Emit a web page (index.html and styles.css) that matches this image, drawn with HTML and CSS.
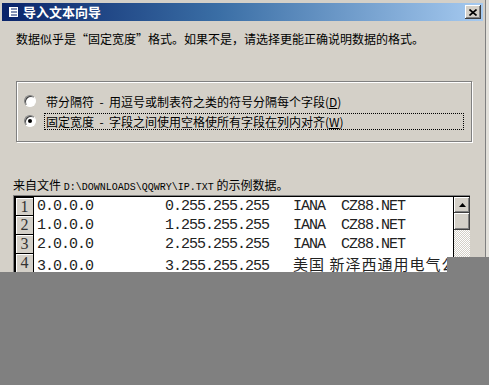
FILE: index.html
```html
<!DOCTYPE html>
<html lang="zh-CN">
<head>
  <meta charset="UTF-8" />
  <title>导入文本向导</title>
  <link rel="stylesheet" href="styles.css">
</head>
<body>

<div class="window">
  <div class="titlebar">
    <svg class="app-icon" width="14" height="12" viewBox="0 0 14 12">
      <rect x="0.5" y="0.5" width="13" height="11" fill="#fff" stroke="#0a246a"/>
      <rect x="1" y="1" width="3" height="10" fill="#0a246a"/>
      <path d="M6 3h6M6 6h6M6 9h6" stroke="#0a246a" stroke-width="1.2"/>
    </svg>
    <span class="title">导入文本向导</span>
    <button class="close">
      <svg width="8" height="7" viewBox="0 0 8 7">
        <path d="M0.5 0.5l7 6M7.5 0.5l-7 6" stroke="#000" stroke-width="1.6"/>
      </svg>
    </button>
  </div>

  <div class="wizard">
    <p class="intro">数据似乎是“固定宽度”格式。如果不是，请选择更能正确说明数据的格式。</p>

    <div class="group">
      <label class="option">
        <span class="radio"></span>
        <span class="option-text">带分隔符 &nbsp;- &nbsp;用逗号或制表符之类的符号分隔每个字段(<u>D</u>)</span>
      </label>
      <label class="option checked">
        <span class="radio"></span>
        <span class="option-text focused">固定宽度 &nbsp;- &nbsp;字段之间使用空格使所有字段在列内对齐(<u>W</u>)</span>
      </label>
    </div>

    <p class="source">来自文件 <span class="path">D:\DOWNLOADS\QQWRY\IP.TXT</span> 的示例数据。</p>

    <div class="preview">
      <div class="rows">
        <div class="row"><span class="num">1</span><span class="line">0.0.0.0         0.255.255.255   IANA  CZ88.NET</span></div>
        <div class="row"><span class="num">2</span><span class="line">1.0.0.0         1.255.255.255   IANA  CZ88.NET</span></div>
        <div class="row"><span class="num">3</span><span class="line">2.0.0.0         2.255.255.255   IANA  CZ88.NET</span></div>
        <div class="row"><span class="num">4</span><span class="line">3.0.0.0         3.255.255.255   <span class="cjk">美国 新泽西通用电气公司</span></span></div>
      </div>
      <div class="scrollbar">
        <div class="scroll-btn">
          <svg width="7" height="4" viewBox="0 0 7 4"><path d="M3.5 0L7 4H0z" fill="#000"/></svg>
        </div>
        <div class="thumb"></div>
        <div class="track"></div>
      </div>
    </div>
  </div>
</div>

<div class="shade">
  <div class="notch"></div>
</div>

</body>
</html>
```

FILE: styles.css
```css
body {
  margin: 0;
  background: #e2e0da;
  font-family: "Noto Sans CJK SC", "Liberation Sans", sans-serif;
  font-size: 12px;
  color: #000;
}
.window {
  width: 486px;
  height: 272px;
  overflow: hidden;
  background: #d4d0c8;
  border-right: 1px solid #808080;
  padding: 3px 2px 0 2px;
  box-sizing: border-box;
}
.titlebar {
  display: flex;
  align-items: center;
  height: 18px;
  padding: 0 2px 0 3px;
  background: linear-gradient(to right, #0a246a, #3a6ea5 45%, #a6caf0);
}
.app-icon {
  margin-right: 4px;
}
.title {
  flex-grow: 1;
  color: #fff;
  font-weight: bold;
  font-size: 13px;
  line-height: 18px;
}
.close {
  width: 16px;
  height: 14px;
  padding: 0;
  border: none;
  background: #d4d0c8;
  display: flex;
  align-items: center;
  justify-content: center;
  box-shadow: inset -1px -1px #404040, inset 1px 1px #fff, inset -2px -2px #808080;
}
.wizard {
  padding-left: 11px;
}
.intro {
  margin: 11px 0 0 3px;
  line-height: 14px;
}
.group {
  margin: 35px 0 0 3px;
  width: 456px;
  box-sizing: border-box;
  padding: 9px 0 10px 7px;
  border: 1px solid #808080;
  box-shadow: inset 1px 1px #fff, 1px 1px #fff;
}
.option {
  display: flex;
  align-items: center;
  height: 20px;
}
.radio {
  flex-shrink: 0;
  width: 12px;
  height: 12px;
  box-sizing: border-box;
  border-radius: 50%;
  background: #fff;
  border: 1px solid;
  border-color: #808080 #fff #fff #808080;
  box-shadow: inset 1px 1px #404040;
  display: flex;
  align-items: center;
  justify-content: center;
  margin-right: 8px;
}
.checked .radio::after {
  content: "";
  width: 4px;
  height: 4px;
  border-radius: 50%;
  background: #000;
}
.option-text {
  flex-grow: 1;
  margin-right: 7px;
  padding: 0 1px;
  line-height: 15px;
  border: 1px dotted transparent;
}
.option-text.focused {
  border-color: #000;
}
.source {
  margin: 36px 0 0 0;
  line-height: 14px;
}
.path {
  font-family: "Liberation Mono", monospace;
  font-size: 10px;
}
.preview {
  display: flex;
  width: 457px;
  height: 80px;
  border-top: 1px solid #808080;
  border-left: 1px solid #808080;
  box-shadow: inset 1px 1px #000;
  padding: 1px 0 0 1px;
  box-sizing: border-box;
}
.rows {
  flex: 1 1 0;
  min-width: 0;
  overflow: hidden;
  background: #fff;
  border-right: 1px solid #000;
}
.row {
  display: flex;
  height: 19px;
}
.num {
  flex-shrink: 0;
  width: 19px;
  box-sizing: border-box;
  background: #d4d0c8;
  border: 1px solid #000;
  border-top: none;
  box-shadow: inset 1px 1px #fff;
  font-family: "Liberation Serif", serif;
  font-size: 16px;
  line-height: 18px;
  text-align: center;
  color: #333;
}
.row:first-child .num {
  border-top: 1px solid #000;
}
.line {
  padding-left: 3px;
  white-space: pre;
  font-family: "Liberation Mono", monospace;
  font-size: 15px;
  letter-spacing: -1px;
  line-height: 19px;
  color: #222;
}
.cjk {
  font-family: "Noto Sans CJK SC", sans-serif;
  letter-spacing: 1px;
}
.scrollbar {
  flex-shrink: 0;
  width: 16px;
  display: flex;
  flex-direction: column;
}
.scroll-btn, .thumb {
  height: 16px;
  background: #d4d0c8;
  box-shadow: inset -1px -1px #404040, inset 1px 1px #fff, inset -2px -2px #808080;
  display: flex;
  align-items: center;
  justify-content: center;
}
.thumb {
  height: 17px;
}
.track {
  flex-grow: 1;
  background: repeating-conic-gradient(#d4d0c8 0 25%, #fff 0 50%) 0 0 / 2px 2px;
}
.shade {
  position: relative;
  height: 113px;
  background: #808080;
}
.notch {
  position: absolute;
  right: 0;
  bottom: 100%;
  width: 42px;
  height: 15px;
  background: #808080;
}
```
